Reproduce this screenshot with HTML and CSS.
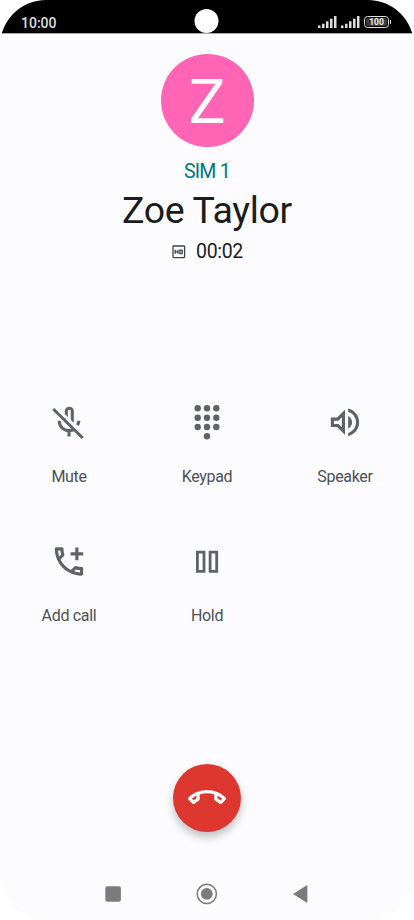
FILE: index.html
```html
<!DOCTYPE html>
<html lang="en">
  <head>
    <meta charset="UTF-8" />
    <meta name="viewport" content="width=device-width, initial-scale=1.0" />
    <title>Call</title>
    <link rel="stylesheet" href="styles.css">
  </head>
  <body>
    <div class="phone">
      <header class="status-bar">
        <span class="time">10:00</span>
        <span class="camera"></span>
        <div class="status-icons">
          <svg class="signal" viewBox="0 0 19 12">
            <path d="M0 9.5h2.5V12H0zM4 7.8h2.5V12H4zM8 5.3h2.5V12H8zM12 2.8h2.5V12H12zM16 0h2.5v12H16z" />
          </svg>
          <svg class="signal" viewBox="0 0 19 12">
            <path d="M0 9.5h2.5V12H0zM4 7.8h2.5V12H4zM8 5.3h2.5V12H8zM12 2.8h2.5V12H12zM16 0h2.5v12H16z" />
          </svg>
          <div class="battery"><span>100</span></div>
        </div>
      </header>

      <section class="caller">
        <div class="avatar">Z</div>
        <p class="sim">SIM 1</p>
        <h1 class="name">Zoe Taylor</h1>
        <div class="duration">
          <svg class="hd" viewBox="0 0 14 14">
            <rect x="1" y="1" width="11.6" height="11.6" rx="0.8" />
            <path d="M3.2 4.8v4M6 4.8v4M3.2 6.8H6M7.9 5.1h1.7q.7 0 .7.7v2q0 .7-.7.7H7.9z" />
          </svg>
          <span>00:02</span>
        </div>
      </section>

      <section class="actions">
        <button class="action">
          <svg class="icon" viewBox="0 0 40 40">
            <g class="line">
              <path d="M17.3 17V9.2a3 3 0 0 1 6 0V20" />
              <path d="M10.2 18.8c0 6 4.2 9.8 9.8 9.8 2 0 4-.5 5.5-1.6M20 28.6v6M29.8 18.8c0 1.6-.4 3-1.3 4.4" />
            </g>
            <path class="gap" d="M6.6 5 36 34" />
            <path class="line" d="M4.3 7 33.7 36" />
          </svg>
          <span>Mute</span>
        </button>
        <button class="action">
          <svg class="icon" viewBox="0 0 40 40">
            <circle cx="10.7" cy="6.3" r="3.2" /><circle cx="20" cy="6.3" r="3.2" /><circle cx="29.3" cy="6.3" r="3.2" />
            <circle cx="10.7" cy="15.7" r="3.2" /><circle cx="20" cy="15.7" r="3.2" /><circle cx="29.3" cy="15.7" r="3.2" />
            <circle cx="10.7" cy="25" r="3.2" /><circle cx="20" cy="25" r="3.2" /><circle cx="29.3" cy="25" r="3.2" />
            <circle cx="20" cy="34.3" r="3.2" />
          </svg>
          <span>Keypad</span>
        </button>
        <button class="action">
          <svg class="icon" viewBox="-0.7 -0.9 25.4 25.4">
            <path d="M3 9v6h4l5 5V4L7 9H3zm7-.17v6.34L7.83 13H5v-2h2.83L10 8.83zM16.5 12c0-1.77-1.02-3.29-2.5-4.03v8.05c1.48-.73 2.5-2.25 2.5-4.02zM14 3.23v2.06c2.89.86 5 3.54 5 6.71s-2.11 5.85-5 6.71v2.06c4.01-.91 7-4.49 7-8.77 0-4.28-2.99-7.86-7-8.77z" />
          </svg>
          <span>Speaker</span>
        </button>
        <button class="action">
          <svg class="icon" viewBox="-0.7 -1 25.4 25.4">
            <path d="M6.54 5c.06.89.21 1.76.45 2.59l-1.2 1.2c-.41-1.2-.67-2.47-.76-3.79h1.51m9.86 12.02c.85.24 1.72.39 2.6.45v1.49c-1.32-.09-2.59-.35-3.8-.75l1.2-1.19M7.5 3H4c-.55 0-1 .45-1 1 0 9.39 7.61 17 17 17 .55 0 1-.45 1-1v-3.49c0-.55-.45-1-1-1-1.24 0-2.45-.2-3.57-.57-.1-.04-.21-.05-.31-.05-.26 0-.51.1-.71.29l-2.2 2.2c-2.83-1.45-5.15-3.76-6.59-6.59l2.2-2.2c.28-.28.36-.67.25-1.02C8.7 6.45 8.5 5.25 8.5 4c0-.55-.45-1-1-1z" />
            <path d="M16 3.2h2v3h3v2h-3v3h-2v-3h-3v-2h3z" />
          </svg>
          <span>Add call</span>
        </button>
        <button class="action">
          <svg class="icon" viewBox="0 0 40 40">
            <path class="line thin" d="M10.4 11.1h6.6v19.2h-6.6zM23.1 11.1h6.6v19.2h-6.6z" />
          </svg>
          <span>Hold</span>
        </button>
      </section>

      <button class="end-call" aria-label="End call">
        <svg viewBox="0 0 24 24">
          <path d="M18.59 10.52c1.05.51 2.04 1.15 2.96 1.91l-1.07 1.07c-.58-.47-1.21-.89-1.88-1.27v-1.71m-13.2 0v1.7c-.65.37-1.28.79-1.87 1.27l-1.07-1.07c.91-.75 1.9-1.38 2.94-1.9M12 7C7.46 7 3.34 8.78.29 11.67c-.18.18-.29.43-.29.71s.11.53.29.7l2.48 2.48c.18.18.43.29.71.29.27 0 .52-.1.7-.28.79-.73 1.68-1.36 2.66-1.85.33-.16.56-.51.56-.9v-3.1C8.85 9.25 10.4 9 12 9s3.15.25 4.59.73v3.1c0 .4.23.74.56.9.98.49 1.88 1.11 2.67 1.85.18.17.43.28.7.28.28 0 .53-.11.71-.29l2.48-2.48c.18-.18.29-.43.29-.71s-.11-.53-.29-.71C20.66 8.78 16.54 7 12 7z" />
        </svg>
      </button>

      <nav class="nav-bar">
        <svg viewBox="0 0 22 22"><rect x="3.3" y="3.2" width="15.6" height="15.6" rx="2.2" /></svg>
        <svg viewBox="0 0 22 22"><circle class="ring" cx="10.8" cy="10.9" r="9.6" /><circle cx="10.8" cy="10.9" r="5.9" /></svg>
        <svg viewBox="0 0 22 22"><path d="M3 11 16.9 2.2q.5 0 .5.6v16.4q0 .6-.5.6z" /></svg>
      </nav>
    </div>
  </body>
</html>
```

FILE: styles.css
```css
* {
  margin: 0;
  padding: 0;
  box-sizing: border-box;
}
body {
  font-family: Roboto, sans-serif;
  background: #fff;
}
button {
  border: none;
  background: none;
  font-family: inherit;
  cursor: pointer;
}
svg {
  display: block;
}
.phone {
  width: 414px;
  height: 920px;
  display: flex;
  flex-direction: column;
  align-items: center;
  background: #fcfcff;
  border-radius: 46px;
  overflow: hidden;
}

/* status bar */
.status-bar {
  width: 100%;
  height: 33px;
  flex-shrink: 0;
  display: grid;
  grid-template-columns: 1fr 24px 1fr;
  align-items: start;
  padding: 0 25px 0 21px;
  background: #000;
  box-shadow: 0 1px 0 #aaaaac;
}
.time {
  margin-top: 14px;
  font-size: 14px;
  line-height: 18px;
  font-weight: 500;
  color: #dedede;
}
.camera {
  width: 24px;
  height: 24px;
  margin-top: 9px;
  border-radius: 50%;
  background: #fff;
  justify-self: center;
  transform: translateX(1.5px);
}
.status-icons {
  display: flex;
  justify-content: flex-end;
  align-items: center;
  gap: 4px;
  margin-top: 16px;
}
.signal {
  width: 19px;
  height: 12px;
  fill: #dedede;
}
.battery {
  position: relative;
  width: 25px;
  height: 12px;
  border: 1px solid #dedede;
  border-radius: 3.5px;
  padding: 1px;
}
.battery span {
  display: block;
  height: 8px;
  border-radius: 2px;
  background: #3c3c3c;
  color: #eee;
  font-size: 8.5px;
  line-height: 8px;
  font-weight: 700;
  text-align: center;
}
.battery::after {
  content: "";
  position: absolute;
  right: -3px;
  top: 3px;
  width: 1px;
  height: 4px;
  background: #dedede;
}

/* caller */
.caller {
  width: 100%;
  display: flex;
  flex-direction: column;
  align-items: center;
  height: 337px;
  padding-top: 21px;
}
.avatar {
  width: 93px;
  height: 93px;
  border-radius: 50%;
  background: #ff64b5;
  color: #fcfcff;
  font-size: 62px;
  line-height: 96px;
  text-align: center;
}
.sim {
  margin-top: 13px;
  font-size: 19.5px;
  line-height: 24px;
  letter-spacing: -0.7px;
  color: #00777e;
}
.name {
  margin-top: 4px;
  font-size: 37.5px;
  line-height: 44px;
  font-weight: 400;
  letter-spacing: -0.35px;
  color: #1a1c1e;
}
.duration {
  display: flex;
  align-items: center;
  gap: 10px;
  margin-top: 8px;
  padding-left: 1px;
  font-size: 19.5px;
  line-height: 24px;
  letter-spacing: -0.3px;
  color: #1a1c1e;
}
.hd {
  width: 14px;
  height: 14px;
  fill: none;
  stroke: #3f4246;
  stroke-width: 1.3;
}

/* call actions */
.actions {
  width: 100%;
  display: grid;
  grid-template-columns: repeat(3, 138px);
  grid-auto-rows: 139px;
  height: 394px;
  padding-top: 32px;
}
.action {
  display: flex;
  flex-direction: column;
  align-items: center;
  gap: 24px;
  font-size: 16px;
  line-height: 21px;
  letter-spacing: -0.32px;
  color: #4c5055;
}
.icon {
  width: 40px;
  height: 40px;
  fill: #5f6368;
}
.icon .line {
  fill: none;
  stroke: #5f6368;
  stroke-width: 3.1;
}
.icon .thin {
  stroke-width: 2.8;
}
.icon .gap {
  stroke: #fcfcff;
  stroke-width: 3;
}

.end-call {
  width: 68px;
  height: 68px;
  flex-shrink: 0;
  border-radius: 50%;
  background: #de3730;
  display: flex;
  align-items: center;
  justify-content: center;
  box-shadow: 0 5px 9px rgba(0, 0, 0, 0.24);
}
.end-call svg {
  width: 38px;
  height: 38px;
  fill: #fff;
}

/* navigation */
.nav-bar {
  display: flex;
  gap: 72px;
  margin-top: 51px;
}
.nav-bar svg {
  width: 22px;
  height: 22px;
  fill: #7b7b7b;
}
.nav-bar .ring {
  fill: none;
  stroke: #7b7b7b;
  stroke-width: 1.5;
}
```
